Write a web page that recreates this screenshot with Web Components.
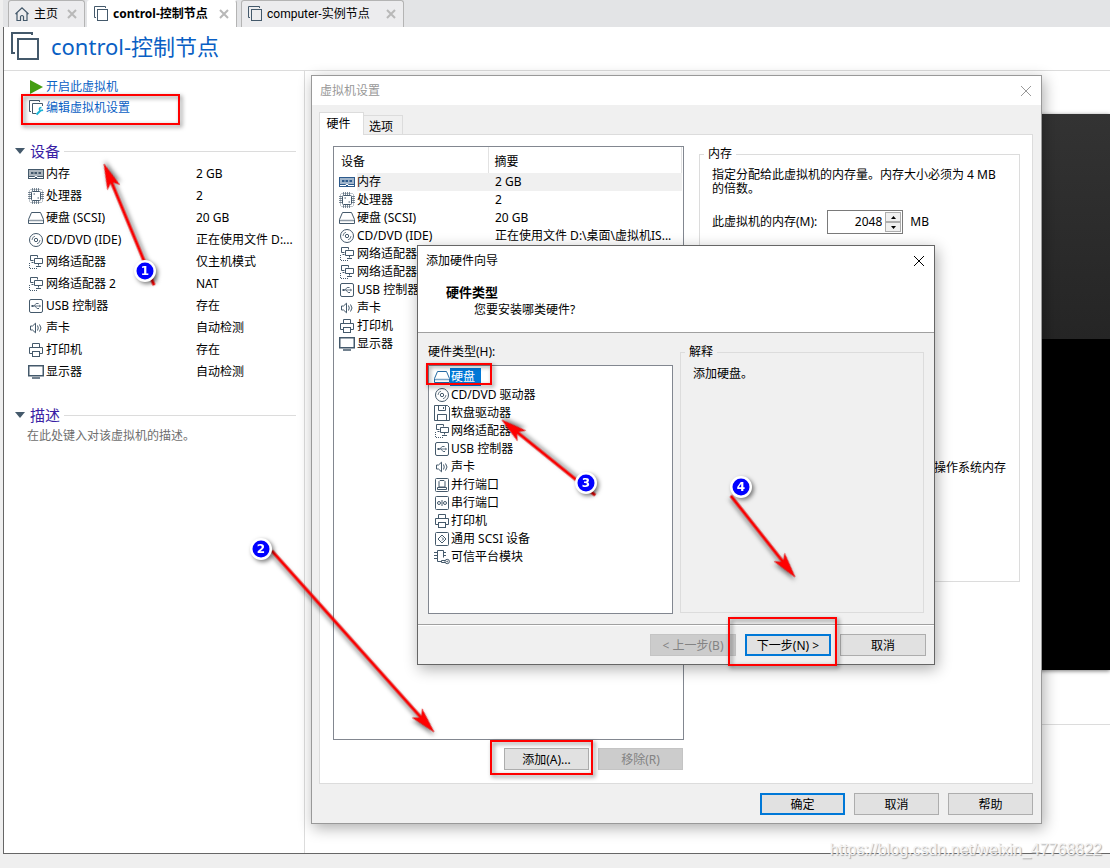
<!DOCTYPE html>
<html lang="zh-CN">
<head>
<meta charset="utf-8">
<title>control-控制节点</title>
<style>
body{margin:0;font:12px/18px "Noto Sans","Noto Sans CJK SC",sans-serif;color:#000;background:#f0f0f0}
</style>
</head>
<body>
<vm-workstation></vm-workstation>
<script>
const BASE='*{box-sizing:border-box}button,input{font:inherit;color:inherit;margin:0;padding:0}button{background:none;border:0}h1,h2,p,ul{margin:0;padding:0;font-weight:400}';
function define(name,css,html){
  customElements.define(name,class extends HTMLElement{
    connectedCallback(){
      if(this.shadowRoot)return;
      const t=document.createElement('template');
      t.innerHTML='<style>'+BASE+css+'</style>'+(typeof html==='function'?html(this):html);
      this.attachShadow({mode:'open'}).append(t.content.cloneNode(true));
    }
  });
}

const ICONS={
  memory:'<rect x=".5" y="3.5" width="15" height="9" fill="#fff"/><rect x="1" y="4" width="14" height="6" fill="currentColor" stroke="none" opacity=".45"/><path d="M3 7h2.500M6.500 7h2.500M10.500 7h2.500" stroke-width="2"/><path d="M1 10.500h5.500l1.500 1.500 1.500-1.500H15"/>',
  cpu:'<rect x="3.500" y="3.500" width="9" height="9" rx="1"/><path d="M4.500 0v3M6.500 0v3M8.500 0v3M10.500 0v3M4.500 13v3M6.500 13v3M8.500 13v3M10.500 13v3M0 4.500h3M0 6.500h3M0 8.500h3M0 10.500h3M13 4.500h3M13 6.500h3M13 8.500h3M13 10.500h3" opacity=".7"/><path d="M1.500 3.500v-1l1-1h11l1 1v11l-1 1h-11l-1-1z" opacity=".35"/><path d="M5.500 6h1.500M9.500 10h1.500"/>',
  disk:'<path d="M3.500 2.500h9l3 7v4H.5v-4z"/><path d="M1 10.500h14" opacity=".6" stroke-width="1.500"/>',
  cd:'<circle cx="8" cy="8" r="6.500"/><circle cx="8" cy="8" r="1.700"/><path d="M4 8A4 4 0 0 1 7 4.200M12 8A4 4 0 0 1 9 11.800" opacity=".75"/>',
  floppy:'<path d="M.5.500h13l2 2v13H.5zM4.500.500v5h7v-5M9.500 2v2M3.500 15.500v-6h9v6"/>',
  net:'<path d="M5.500 6.500h-3v-5h7v2M3.500 8.500h2"/><path d="M6.500 4.500h8v5h-8zM10.500 9.500v2M8 12.500h5"/><path d="M1.500 9v5.500h8" stroke-dasharray="1 1"/>',
  usb:'<rect x="1.500" y="1.500" width="13" height="13" rx="1.500"/><path d="M4 8h8M6 8l2-2.500h2M7 8l2 2.500h1.500" opacity=".8"/><path d="M3.500 7h2v2h-2zM11.500 6.500l1.500 1.500-1.500 1.500zM9.500 5h1v1h-1zM10 10h1v1h-1z" fill="currentColor" stroke="none"/>',
  sound:'<path d="M2.500 6h2l3-2.800v9.600L4.500 10h-2zM9.500 5.500q1.500 2.500 0 5M11.500 4.500q3 3.500 0 7"/>',
  printer:'<path d="M4.500 5.500v-4h7v4M4.500 11.500h-3v-6h13v6h-3"/><rect x="4.500" y="9.500" width="7" height="5"/>',
  display:'<rect x=".750" y="1.750" width="14.500" height="10" stroke-width="1.500"/><path d="M4 14h8" stroke-width="1.500"/>',
  parallel:'<rect x="1.500" y="1.500" width="13" height="13" rx="1"/><path d="M5 10V4.500l1-1h4l1 1V10zM3.500 12.500h9v-2h-9z"/>',
  serial:'<rect x="1.500" y="1.500" width="13" height="13" rx="1"/><circle cx="5" cy="8" r="1.500"/><circle cx="11" cy="8" r="1.500"/><path d="M8 5v6"/>',
  scsi:'<rect x="1.500" y="1.500" width="13" height="13" rx="1"/><path d="M8 4L12 8 8 12 4 8zM8 6.500L9.500 8 8 9.500"/>',
  tpm:'<path d="M8 12.500H3.500v-11h6v7M0 3.500h3M0 6.500h3M0 9.500h3M10 3.500h2M10 6.500h2"/><circle cx="13.200" cy="12.500" r="2.200"/><circle cx="13.200" cy="12.500" r=".5"/><path d="M11 11.500H7.500v2H11"/>',
  home:'<path d="M1.500 8L8 1.800 14.500 8M3 7v7.500h3.500V10.500q1.500-2 3 0v4H13V7" stroke-width="1.200"/>',
  vm:'<path d="M3 11.500H1.500v-11h11V2"/><rect x="4.500" y="3.500" width="10" height="11"/>',
  edit:'<path d="M3 11.500H1.500v-11h10V2M8 13.500H4.500v-10h10V6"/><path d="M8.500 14.500l4-4" stroke="#1ab2d4" stroke-width="2"/><path d="M13.500 7.500q-2.500 0-2 2.200 1 1.600 3.500.3" stroke="#1ab2d4" stroke-width="1.500"/>',
  play:'<path d="M2 1l13 7L2 15z" fill="#449e12" stroke="none"/>',
  close:'<path d="M3 3l10 10M13 3L3 13"/>'
};
define('hw-icon',':host{display:inline-block;width:16px;height:16px;color:#44596b;flex:none}svg{display:block;width:100%;height:100%}',
  el=>`<svg viewBox="0 0 16 16" fill="none" stroke="currentColor" aria-hidden="true">${ICONS[el.getAttribute('name')]}</svg>`);

define('vm-tab',`:host{display:flex;align-items:center;height:27px;padding:0 6px 0 5px;border:1px solid #b4b4b4;border-width:1px 1px 0;border-radius:3px 3px 0 0;background:#ececee}
:host([active]){background:#fff;border-color:#fff #b4b4b4 #fff #fff;font-weight:700}
button{display:flex;align-items:center;white-space:nowrap}
.t{gap:4px;flex:1}
.x{width:12px;height:12px;color:#b8b8b8}`,
 el=>`<button class="t"><hw-icon name="${el.getAttribute('icon')}"></hw-icon><slot></slot></button><button class="x" aria-label="关闭"><svg width="12" height="12" viewBox="0 0 12 12" fill="none" stroke="currentColor" stroke-width="2" aria-hidden="true"><path d="M2 2l8 8M10 2L2 10"/></svg></button>`);

define('push-button',`:host{display:block;width:86px;height:24px;padding:1px 0}
button{display:block;width:100%;height:22px;line-height:18px;padding-top:2px;border:1px solid #adadad;background:#e1e1e1;white-space:nowrap}
:host([primary]) button{border:2px solid #0078d7;padding-top:1px}
button:disabled{background:#ccc;border-color:#c4c4c4;color:#838383}`,
 el=>`<button ${el.hasAttribute('disabled')?'disabled':''}><slot></slot></button>`);

const DEVICES=[['memory','内存','2 GB','2 GB'],['cpu','处理器','2','2'],['disk','硬盘 (SCSI)','20 GB','20 GB'],['cd','CD/DVD (IDE)','正在使用文件 D:...','正在使用文件 D:\\桌面\\虚拟机IS...'],['net','网络适配器','仅主机模式',''],['net','网络适配器 2','NAT',''],['usb','USB 控制器','存在',''],['sound','声卡','自动检测',''],['printer','打印机','存在',''],['display','显示器','自动检测','']];

define('device-summary',`:host{display:block}table{border-collapse:collapse;width:100%;table-layout:fixed}
td{padding:0;height:22px;white-space:nowrap}td:first-child{width:168px}
.n{display:flex;align-items:center;gap:2px}`,
 ()=>`<table>${DEVICES.map(d=>`<tr><td><div class="n"><hw-icon name="${d[0]}"></hw-icon><span>${d[1]}</span></div></td><td>${d[2]}</td></tr>`).join('')}</table>`);

define('side-section',`:host{display:block}header{display:flex;align-items:center;gap:4px;height:24px}
h2{font-size:15px;line-height:24px;color:#3a1fa5}header:after{content:"";flex:1;height:1px;background:#dcdcdc}
svg{margin-right:1px}`,
 el=>`<header><svg width="10" height="6" viewBox="0 0 10 6" aria-hidden="true"><path d="M0 0h10L5 6z" fill="#44596b"/></svg><h2>${el.getAttribute('heading')}</h2></header><slot></slot>`);

define('vm-sidebar',`:host{display:block;width:301px;border-right:1px solid #dcdcdc;padding:5px 8px 0 11px}
nav{padding:0 0 21px 13px}a{display:flex;align-items:center;gap:2px;height:21px;color:#0a5fc4;text-decoration:none}
device-summary{padding-left:13px}side-section+side-section{margin-top:20px}
p{padding-left:12px;line-height:18px;color:#6e6e6e}`,
 `<nav><a href="#start"><hw-icon name="play"></hw-icon>开启此虚拟机</a><a href="#edit"><hw-icon name="edit"></hw-icon>编辑虚拟机设置</a></nav>
 <side-section heading="设备"><device-summary></device-summary></side-section>
 <side-section heading="描述"><p>在此处键入对该虚拟机的描述。</p></side-section>`);

define('vm-console',`:host{display:flex;flex-direction:column;flex:1;padding-left:16px}
.top{height:43px}.screen{height:556px;background:linear-gradient(#333,#252525 225px,#000 225px);box-shadow:0 1px 4px #777}
.rule{margin-top:54px;height:1px;background:#dcdcdc}`,
 `<div class="top"></div><div class="screen"></div><div class="rule"></div>`);

define('win-dialog',`:host{display:flex;flex-direction:column;background:#f0f0f0;border:1px solid #999;box-shadow:2px 4px 14px rgba(0,0,0,.32)}
header{display:flex;justify-content:space-between;align-items:center;height:29px;padding:0 7px 0 8px;background:#fff;flex:none;color:var(--title)}
.x{width:16px;height:16px}.x hw-icon{color:var(--title)}`,
 el=>`<header><span>${el.getAttribute('heading')}</span><button class="x" aria-label="关闭"><hw-icon name="close"></hw-icon></button></header><slot></slot>`);

define('group-box',`:host{display:block;min-width:0}
fieldset{height:100%;margin:0;min-width:0;border:1px solid #dcdcdc;padding:0 12px}
legend{padding:0 4px;margin-left:-8px;line-height:18px}`,
 el=>`<fieldset><legend>${el.getAttribute('heading')}</legend><slot></slot></fieldset>`);

define('device-list',`:host{display:block;border:1px solid #828790;background:#fff;padding:0 1px}
table{width:100%;border-collapse:collapse;table-layout:fixed}
th{height:26px;padding:3px 6px 0;text-align:left;font-weight:400;border-right:1px solid #e2e2e2}
th:first-child{width:153px}
td{padding:0 7px;height:18px;white-space:nowrap}td:first-child{padding-left:4px}
tr.on td+td{background:#f0f0f0}tr.on span{background:#f0f0f0;flex:1}tr.on td:first-child{padding-right:0}
.on hw-icon{color:#2c5a8c}
.n{display:flex;align-items:center;gap:2px}`,
 ()=>`<table><thead><tr><th>设备</th><th>摘要</th></tr></thead><tbody>${DEVICES.map((d,i)=>`<tr class="${i?'':'on'}"><td><div class="n"><hw-icon name="${d[0]}"></hw-icon><span>${d[1].replace(' 2','')}</span></div></td><td>${d[3]}</td></tr>`).join('')}</tbody></table>`);

define('memory-field',`:host{display:flex;align-items:center}
.spin{display:flex;width:76px;height:24px;margin:0 7px 0 10px;border:1px solid #7a7a7a;background:#fff;padding:1px}
input{flex:1;min-width:0;border:0;outline:0;text-align:right;padding-right:3px;background:none}
.b{display:grid;width:16px}.b button{display:grid;place-items:center;border:1px solid #adadad;background:#f0f0f0}`,
 `<label for="mem">此虚拟机的内存(M):</label><div class="spin"><input id="mem" value="2048"><div class="b"><button aria-label="增加"><svg width="5" height="3" aria-hidden="true"><path d="M0 3h5L2.500 0z"/></svg></button><button aria-label="减少"><svg width="5" height="3" aria-hidden="true"><path d="M0 0h5L2.500 3z"/></svg></button></div></div><span>MB</span>`);

define('settings-dialog',`:host{display:block}win-dialog{height:100%;--title:#999}
push-button{width:85px}
.body{flex:1;display:flex;flex-direction:column;padding:7px 8px 7px 7px;min-height:0}
.tabs{display:flex;align-items:flex-end;height:22px;flex:none}
.tabs button{width:39px;height:19px;padding:2px 4px 0 0;border:1px solid #dcdcdc;border-width:1px 1px 0 0}
.tabs button.on{position:relative;width:45px;height:23px;margin-bottom:-1px;border-left-width:1px;background:#fff;padding:0 6px 0 0}
.panel{flex:1;display:grid;grid-template-columns:351px 1fr;column-gap:15px;background:#fff;border:1px solid #dcdcdc;padding:11px 12px 12px 13px;min-height:0}
.left{display:flex;flex-direction:column;min-height:0}device-list{flex:1}
.acts{display:flex;justify-content:flex-end;gap:9px;padding:7px 1px 0 0}
group-box{height:437px;margin-top:-1px}
p{line-height:14px;margin:5px 0 14px}
.os{text-align:right;margin-top:227px;padding-right:1px}
footer{display:flex;justify-content:flex-end;gap:9px;padding-top:8px}`,
 `<win-dialog heading="虚拟机设置"><div class="body"><div class="tabs" role="tablist"><button class="on" role="tab" aria-selected="true">硬件</button><button role="tab">选项</button></div>
 <div class="panel"><div class="left"><device-list></device-list><div class="acts"><push-button>添加(A)...</push-button><push-button disabled>移除(R)</push-button></div></div>
 <group-box heading="内存"><p>指定分配给此虚拟机的内存量。内存大小必须为 4 MB 的倍数。</p><memory-field></memory-field><p class="os">操作系统内存</p></group-box></div>
 <footer><push-button primary>确定</push-button><push-button>取消</push-button><push-button>帮助</push-button></footer></div></win-dialog>`);

const TYPES=[['disk','硬盘'],['cd','CD/DVD 驱动器'],['floppy','软盘驱动器'],['net','网络适配器'],['usb','USB 控制器'],['sound','声卡'],['parallel','并行端口'],['serial','串行端口'],['printer','打印机'],['scsi','通用 SCSI 设备'],['tpm','可信平台模块']];
define('hardware-types',`:host{display:block;border:1px solid #828790;background:#fff;padding:2px 5px}
li{display:flex;align-items:center;gap:1px;height:18px;list-style:none;white-space:nowrap}
.on span{background:#0078d7;color:#fff;padding:0 6px 0 1px;height:18px;margin-left:-1px}.on hw-icon{color:#2469a3}`,
 ()=>`<ul role="listbox" aria-label="硬件类型">${TYPES.map((d,i)=>`<li role="option" class="${i?'':'on'}"><hw-icon name="${d[0]}"></hw-icon><span>${d[1]}</span></li>`).join('')}</ul>`);

define('add-wizard',`:host{display:block}win-dialog{height:100%;border-color:#666;--title:#000}
.head{height:58px;flex:none;padding:8px 28px 0;background:#fff;border-bottom:1px solid #a0a0a0}
h2{font-weight:700;font-size:13px;line-height:18px}.head p{padding-left:28px}
.main{flex:1;display:grid;grid-template-columns:245px 1fr;column-gap:7px;padding:10px;min-height:0}
.left{display:flex;flex-direction:column}.left>span{line-height:18px;margin-bottom:4px}hardware-types{flex:1}
group-box{margin-bottom:1px}group-box p{margin-top:4px}
footer{display:flex;gap:9px;justify-content:flex-end;height:40px;padding:8px 8px 0;border-top:1px solid #a0a0a0;box-shadow:inset 0 1px #fff}`,
 `<win-dialog heading="添加硬件向导"><div class="head"><h2>硬件类型</h2><p>您要安装哪类硬件?</p></div>
 <div class="main"><div class="left"><span>硬件类型(H):</span><hardware-types></hardware-types></div><group-box heading="解释"><p>添加硬盘。</p></group-box></div>
 <footer><push-button disabled>&lt; 上一步(B)</push-button><push-button primary>下一步(N) &gt;</push-button><push-button>取消</push-button></footer></win-dialog>`);

function arrow(x1,y1,x2,y2){
  const L=Math.hypot(x2-x1,y2-y1),a=Math.atan2(y2-y1,x2-x1)*180/Math.PI;
  return `<g transform="translate(${x2} ${y2}) rotate(${a})"><path d="M${-L} -1.200L-20 -1.200L-25 -6.500L0 0L-25 6.500L-20 1.200L${-L} 1.200z" fill="red" stroke="#d00" stroke-width=".5"/></g>`;
}
const box=(x,y,w,h)=>`<rect x="${x+1}" y="${y+1}" width="${w-2}" height="${h-2}" fill="none" stroke="red" stroke-width="2"/>`;
const badge=(n,x,y)=>`<g><circle cx="${x}" cy="${y}" r="11" fill="#fff"/><circle cx="${x}" cy="${y}" r="8.500" fill="#00f"/><text x="${x}" y="${y+4}" text-anchor="middle">${n}</text></g>`;
define('step-marks',`:host{display:block;pointer-events:none}svg{display:block;width:100%;height:100%}g.s>*{filter:drop-shadow(2px 2px 2px rgba(0,0,0,.5))}
text{font:700 12px "DejaVu Sans",sans-serif;fill:#fff}`,
 ()=>`<svg><g class="s">${box(21,94,159,31)}${box(426,363,66,22)}${box(728,617,109,49)}${box(490,740,103,35)}
 ${arrow(154,285,104,164)}${arrow(272,551,434,732)}${arrow(595,495,502,420)}${arrow(731,496,795,577)}
 ${badge(1,145,271)}${badge(2,261,549)}${badge(3,586,483)}${badge(4,741,487)}</g></svg>`);

define('vm-workstation',`:host{box-sizing:border-box;display:flex;flex-direction:column;position:relative;min-height:100vh;padding:0 0 14px 3px;overflow:hidden;background:#efefef}
.tabs{display:flex;height:27px;padding-left:5px;background:#e3e4e6}
vm-tab:nth-child(1){width:77px}vm-tab:nth-child(2){width:150px;margin:0 4px 0 2px}vm-tab:nth-child(3){width:163px;font-family:Roboto,"Noto Sans CJK SC",sans-serif}
.page{flex:1;display:flex;flex-direction:column;background:#fff;border-left:1px solid #666;border-bottom:1px solid #666}
.title{display:flex;align-items:center;height:44px;padding:0 6px 5px;gap:9px;border-bottom:1px solid #dcdcdc}
h1{font-size:22px;line-height:32px;color:#0a5fc4}
.cols{flex:1;display:flex}
settings-dialog{position:absolute;left:311px;top:75px;width:731px;height:749px}
add-wizard{position:absolute;left:417px;top:245px;width:518px;height:420px}
step-marks{position:absolute;inset:0}
.mark{position:absolute;right:8px;bottom:6px;font:16px/24px "Liberation Sans",sans-serif;color:#f4f4f4;text-shadow:1px 1px 1px #aaa}`,
 `<div class="tabs"><vm-tab icon="home">主页</vm-tab><vm-tab icon="vm" active>control-控制节点</vm-tab><vm-tab icon="vm">computer-实例节点</vm-tab></div>
 <div class="page"><div class="title"><svg width="32" height="30" viewBox="0 0 32 30" fill="none" stroke="#44596b" stroke-width="2" aria-hidden="true"><path d="M5 22H2V2h20v2"/><path d="M8 8h20v20H8z"/></svg><h1>control-控制节点</h1></div>
 <div class="cols"><vm-sidebar></vm-sidebar><vm-console></vm-console></div></div>
 <settings-dialog></settings-dialog><add-wizard></add-wizard><step-marks></step-marks><span class="mark">https://blog.csdn.net/weixin_47768822</span>`);
</script>
</body>
</html>
